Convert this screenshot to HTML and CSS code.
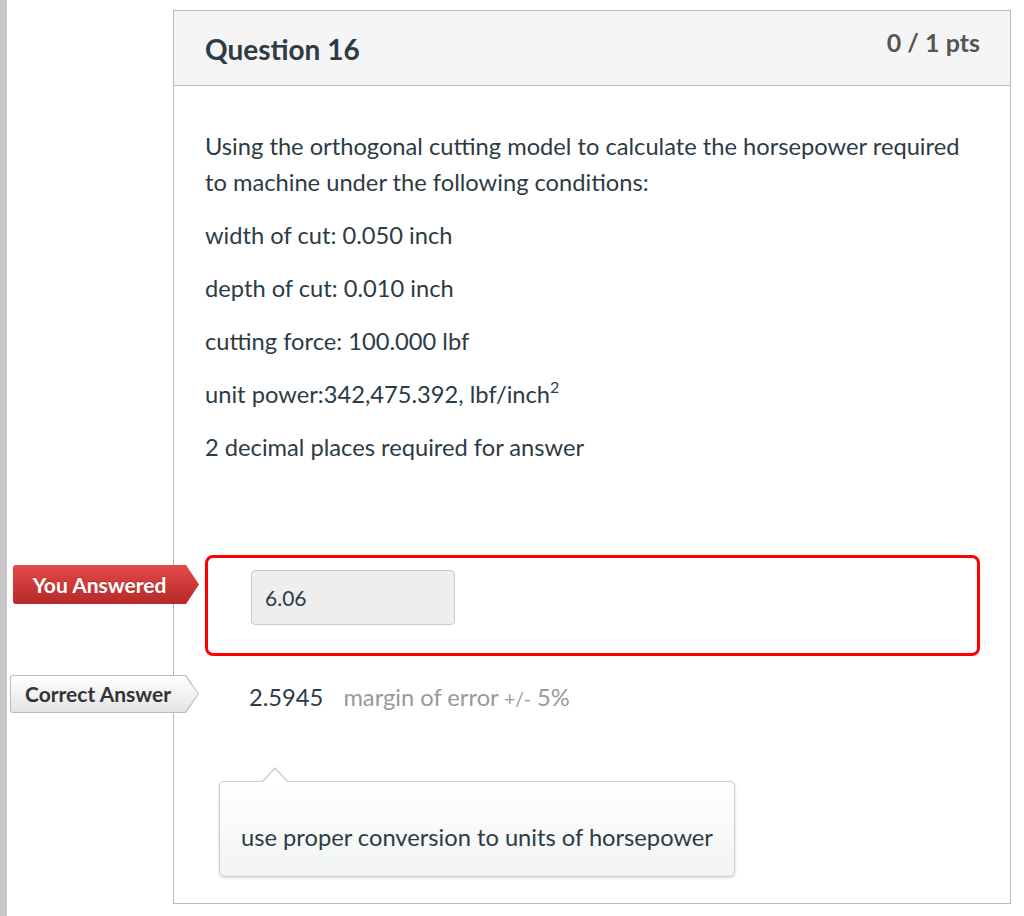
FILE: index.html
```html
<!DOCTYPE html>
<html lang="en">
<head>
<meta charset="utf-8">
<title>Question 16</title>
<link rel="stylesheet" href="styles.css">
</head>
<body>
<div class="page">
  <div class="question">
    <div class="q-header">
      <h2 class="q-title">Question 16</h2>
      <div class="q-points">0 / 1 pts</div>
    </div>
    <div class="q-body">
      <div class="q-text">
        <p>Using the orthogonal cutting model to calculate the horsepower required to machine under the following conditions:</p>
        <p>width of cut: 0.050 inch</p>
        <p>depth of cut: 0.010 inch</p>
        <p>cutting force: 100.000 lbf</p>
        <p>unit power:342,475.392, lbf/inch<sup>2</sup></p>
        <p>2 decimal places required for answer</p>
      </div>
      <div class="answers">
        <div class="answer-row">
          <div class="label label-wrong">You Answered</div>
          <div class="wrong-box">
            <div class="answer-input">6.06</div>
          </div>
        </div>
        <div class="answer-row correct-row">
          <div class="label label-correct"><span>Correct Answer</span></div>
          <span class="correct-value">2.5945</span>
          <span class="margin">margin of error <span class="pm">+/-</span> 5%</span>
        </div>
        <div class="comment">use proper conversion to units of horsepower</div>
      </div>
    </div>
  </div>
</div>
</body>
</html>
```

FILE: styles.css
```css
html, body {
  margin: 0;
  padding: 0;
  background: #fff;
}

body {
  font-family: Lato, "Open Sans", sans-serif;
  color: #2d3b45;
}

.page {
  min-height: 916px;
  border-left: 7px solid #c6c6c6;
  padding: 10px 0 0 166px;
  box-sizing: border-box;
}

.question {
  width: 838px;
  box-sizing: border-box;
  border: 1px solid #b9b9b9;
}

.q-header {
  height: 74px;
  background: #f5f5f5;
  border-bottom: 1px solid #b9b9b9;
  display: flex;
  justify-content: space-between;
  align-items: flex-start;
  padding: 0 30px 0 31px;
}

.q-title {
  margin: 0;
  padding-top: 21px;
  font-size: 28px;
  line-height: 34px;
  font-weight: 700;
  color: #2d3b45;
}

.q-points {
  padding-top: 16px;
  font-size: 25px;
  line-height: 30px;
  font-weight: 700;
  color: #555;
}

.q-body {
  padding: 42px 30px 26px 31px;
}

.q-text p {
  margin: 0 0 17px;
  font-size: 23.7px;
  line-height: 36px;
}

.q-text sup {
  font-size: 16px;
  line-height: 0;
  vertical-align: 10px;
}

.answers {
  margin-top: 90px;
}

.answer-row {
  position: relative;
}

.wrong-box {
  border: 3px solid #ff0000;
  border-radius: 8px;
  height: 101px;
  box-sizing: border-box;
  padding: 12px 0 0 43px;
}

.answer-input {
  width: 204px;
  height: 55px;
  box-sizing: border-box;
  background: #eeeeee;
  border: 1px solid #cccccc;
  border-radius: 4px;
  padding: 0 13px;
  font-size: 21px;
  line-height: 53px;
  color: #2d3b45;
}

.label {
  position: absolute;
  font-weight: 700;
  font-size: 21px;
  text-align: center;
  box-sizing: border-box;
  clip-path: polygon(0 0, calc(100% - 13px) 0, 100% 50%, calc(100% - 13px) 100%, 0 100%);
}

.label-wrong {
  left: -192px;
  top: 10px;
  width: 186px;
  height: 39px;
  line-height: 39px;
  padding-right: 13px;
  color: #fff;
  border-radius: 3px 0 0 3px;
  background: linear-gradient(#e44a49, #b6292a);
  text-shadow: 0 -1px 0 rgba(0, 0, 0, 0.2);
}

.label-correct {
  left: -195px;
  top: -1px;
  width: 189px;
  height: 38px;
  line-height: 38px;
  padding-right: 13px;
  color: #333;
  background: #bdbdbd;
  border-radius: 3px 0 0 3px;
}

.label-correct::before {
  content: "";
  position: absolute;
  left: 1px;
  top: 1px;
  right: 1px;
  bottom: 1px;
  border-radius: 2px 0 0 2px;
  background: linear-gradient(#ffffff, #e4e4e4);
  clip-path: polygon(0 0, calc(100% - 13px) 0, 100% 50%, calc(100% - 13px) 100%, 0 100%);
}

.label-correct span {
  position: relative;
}

.correct-row {
  margin-top: 20px;
  padding-left: 44px;
  font-size: 23.7px;
  line-height: 42px;
}

.correct-value {
  color: #2d3b45;
  margin-right: 14px;
}

.margin {
  color: #999999;
}

.margin .pm {
  font-size: 19px;
}

.comment {
  position: relative;
  margin: 61px 0 0 14px;
  width: 516px;
  height: 96px;
  box-sizing: border-box;
  border: 1px solid #c7cdd1;
  border-radius: 5px;
  background: linear-gradient(#ffffff, #f2f3f4);
  box-shadow: 0 1px 3px rgba(0, 0, 0, 0.15);
  padding: 39px 0 0 21px;
  font-size: 23.7px;
  line-height: 32px;
  color: #2d3b45;
}

.comment::before {
  content: "";
  position: absolute;
  left: 42px;
  top: -15px;
  border-left: 13px solid transparent;
  border-right: 13px solid transparent;
  border-bottom: 14px solid #c7cdd1;
}

.comment::after {
  content: "";
  position: absolute;
  left: 43px;
  top: -13px;
  border-left: 12px solid transparent;
  border-right: 12px solid transparent;
  border-bottom: 13px solid #ffffff;
}
```
